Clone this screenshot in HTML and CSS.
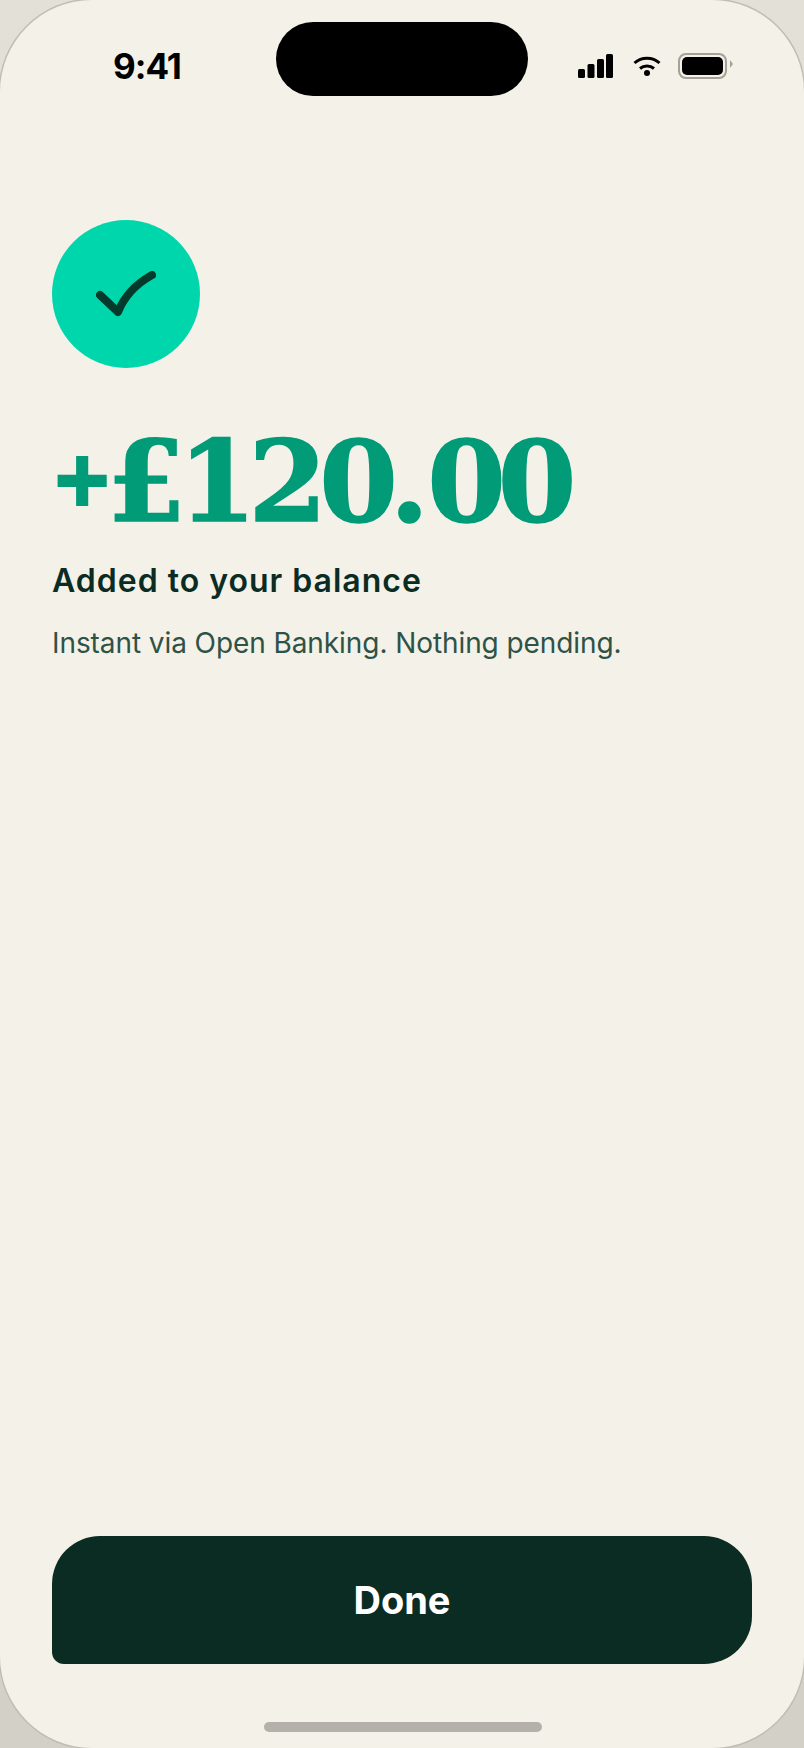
FILE: index.html
```html
<!DOCTYPE html>
<html lang="en">
<head>
  <meta charset="UTF-8" />
  <title>Added to your balance</title>
  <link rel="stylesheet" href="styles.css">
</head>
<body>
  <div class="phone">
    <div class="statusBar">
      <span class="time">9:41</span>
      <div class="island"></div>
      <div class="statusIcons">
        <svg width="35" height="24" viewBox="0 0 35 24">
          <rect x="0" y="15" width="7" height="9" rx="1.5" />
          <rect x="9.5" y="10" width="7" height="14" rx="1.5" />
          <rect x="19" y="5" width="7" height="19" rx="1.5" />
          <rect x="28" y="0" width="7" height="24" rx="1.5" />
        </svg>
        <svg width="28" height="20" viewBox="0 0 28 20" fill="none" stroke="#000" stroke-width="3">
          <path d="M1.5 7 C8.5 0.5 19.5 0.5 26.5 7" />
          <path d="M7 12.5 C11 9 17 9 21 12.5" />
          <circle cx="14" cy="17" r="3" fill="#000" stroke="none" />
        </svg>
        <div class="battery">
          <div class="batteryFill"></div>
        </div>
      </div>
    </div>

    <main class="content">
      <div class="checkCircle">
        <svg width="60" height="46" viewBox="0 0 60 46" fill="none" stroke="#043a2c" stroke-width="8" stroke-linecap="round" stroke-linejoin="round">
          <path d="M4 24 L22 41 C28 26 38 14 56 4" />
        </svg>
      </div>
      <div class="amount"><span class="plus">+</span>£120<span class="dot">.</span>00</div>
      <h1 class="title">Added to your balance</h1>
      <p class="subtitle">Instant via Open Banking. Nothing pending.</p>
    </main>

    <button class="doneBtn">Done</button>
    <div class="homeBar"></div>
  </div>
</body>
</html>
```

FILE: styles.css
```css
body {
  margin: 0;
  height: 1748px;
  overflow: hidden;
  background: linear-gradient(#e3e1d7, #d3d1c7);
  font-family: "Inter", sans-serif;
}
.phone {
  width: 804px;
  height: 1748px;
  box-sizing: border-box;
  padding: 0 52px;
  display: flex;
  flex-direction: column;
  background: #f4f1e8;
  border-radius: 92px;
  box-shadow: 0 0 0 1.5px #c0beb4;
}
.statusBar {
  height: 96px;
  margin: 0 -52px;
  padding: 22px 0 0 113px;
  display: flex;
  align-items: center;
  box-sizing: border-box;
}
.time {
  width: 163px;
  padding-top: 14px;
  font-size: 35px;
  font-weight: 700;
  letter-spacing: -1px;
  color: #000;
}
.island {
  width: 252px;
  height: 74px;
  background: #000;
  border-radius: 37px;
}
.statusIcons {
  display: flex;
  align-items: center;
  gap: 20px;
  margin-left: 50px;
  padding-top: 13px;
}
.statusIcons svg:nth-child(2) {
  margin-right: -3px;
}
.battery {
  width: 41px;
  height: 18px;
  padding: 2px;
  border: 2px solid #a5a197;
  border-radius: 8px;
  position: relative;
}
.battery::after {
  content: "";
  position: absolute;
  right: -8px;
  top: 5px;
  border-left: 3px solid #a5a197;
  border-top: 4px solid transparent;
  border-bottom: 4px solid transparent;
}
.batteryFill {
  width: 100%;
  height: 100%;
  background: #000;
  border-radius: 5px;
}
.content {
  flex: 1;
  padding-top: 124px;
}
.checkCircle {
  width: 148px;
  height: 148px;
  background: #00d6ab;
  border-radius: 50%;
  display: flex;
  align-items: center;
  justify-content: center;
}
.amount {
  margin-top: 50px;
  font-family: "DejaVu Serif", serif;
  font-weight: 700;
  font-size: 113px;
  line-height: 122px;
  letter-spacing: -8px;
  color: #019b78;
  -webkit-text-stroke: 1.5px #019b78;
  white-space: nowrap;
}
.plus {
  font-size: 72px;
  vertical-align: 17px;
  -webkit-text-stroke: 4px #019b78;
  letter-spacing: -5px;
}
.dot {
  letter-spacing: -2px;
}
.title {
  margin: 18px 0 0;
  font-size: 32px;
  font-weight: 600;
  letter-spacing: 1px;
  color: #0b2c23;
}
.subtitle {
  margin: 26px 0 0;
  font-size: 28px;
  font-weight: 400;
  letter-spacing: -0.08px;
  color: #2f5247;
}
.doneBtn {
  height: 128px;
  width: 700px;
  flex-shrink: 0;
  border: none;
  background: #0b2c23;
  color: #fff;
  font-family: "Inter", sans-serif;
  font-size: 38px;
  font-weight: 700;
  border-radius: 48px 48px 48px 12px;
}
.homeBar {
  width: 278px;
  height: 10px;
  margin: 58px 0 16px 212px;
  background: #b5b1aa;
  border-radius: 5px;
}
```
